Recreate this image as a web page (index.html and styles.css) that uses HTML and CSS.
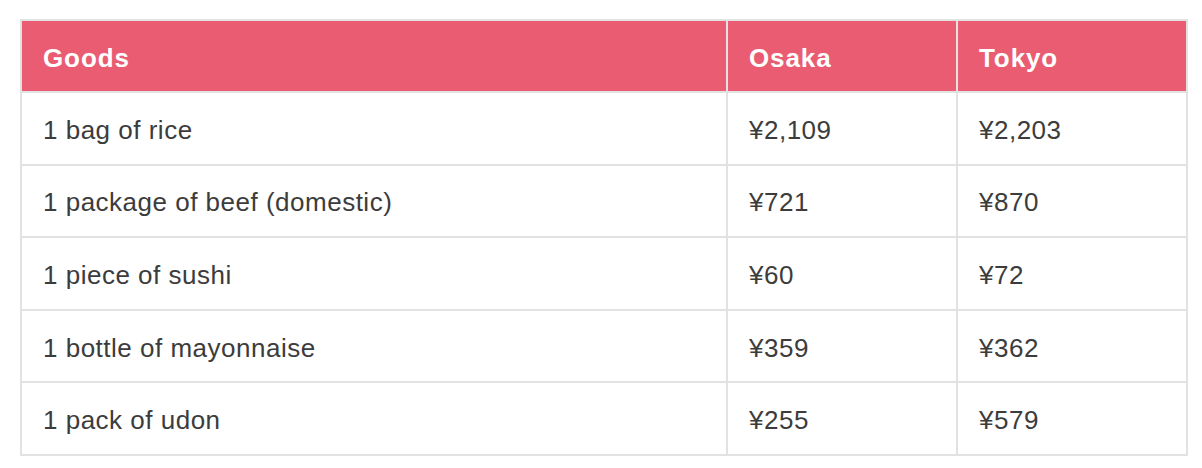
FILE: index.html
```html
<!DOCTYPE html>
<html>
<head>
<meta charset="utf-8">
<link rel="stylesheet" href="styles.css">
</head>
<body>
<table class="prices">
  <colgroup>
    <col class="col-goods">
    <col class="col-city">
    <col class="col-city">
  </colgroup>
  <thead>
    <tr><th>Goods</th><th>Osaka</th><th>Tokyo</th></tr>
  </thead>
  <tbody>
    <tr><td>1 bag of rice</td><td>¥2,109</td><td>¥2,203</td></tr>
    <tr><td>1 package of beef (domestic)</td><td>¥721</td><td>¥870</td></tr>
    <tr><td>1 piece of sushi</td><td>¥60</td><td>¥72</td></tr>
    <tr><td>1 bottle of mayonnaise</td><td>¥359</td><td>¥362</td></tr>
    <tr><td>1 pack of udon</td><td>¥255</td><td>¥579</td></tr>
  </tbody>
</table>
</body>
</html>
```
FILE: styles.css
```css
html, body {
  margin: 0;
  padding: 0;
  background: #ffffff;
}
body {
  padding: 19px 0 0 20px;
  font-family: "Liberation Sans", Arial, Helvetica, sans-serif;
}
.prices {
  border-collapse: separate;
  border-spacing: 0;
  table-layout: fixed;
  width: 1168px;
  border-top: 2px solid #e2e2e2;
  border-left: 2px solid #e2e2e2;
}
.col-goods { width: 706px; }
.col-city { width: 230px; }
.prices th,
.prices td {
  border-right: 2px solid #e2e2e2;
  border-bottom: 2px solid #e2e2e2;
  padding: 3px 21px 0;
  text-align: left;
  vertical-align: middle;
  font-size: 26px;
  line-height: 30px;
}
.prices th {
  background: #e95c71;
  color: #ffffff;
  font-weight: bold;
  letter-spacing: 0.9px;
  height: 67px;
}
.prices td {
  color: #3c3c3c;
  font-weight: normal;
  letter-spacing: 0.5px;
  height: 67.6px;
}
```
